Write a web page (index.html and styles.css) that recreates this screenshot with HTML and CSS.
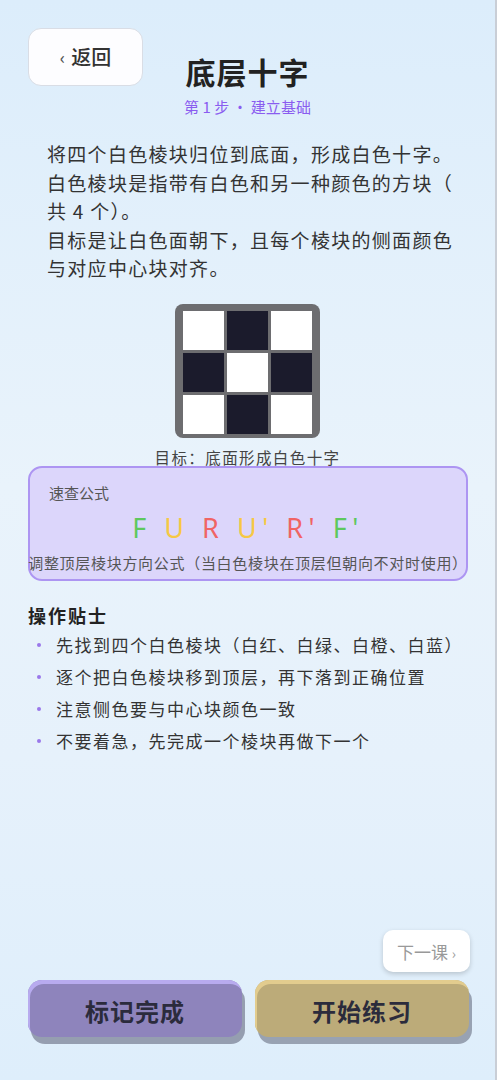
FILE: index.html
```html
<!DOCTYPE html>
<html lang="zh-CN">
<head>
<meta charset="UTF-8">
<meta name="viewport" content="width=device-width, initial-scale=1.0">
<title>底层十字</title>
<link rel="stylesheet" href="styles.css">
</head>
<body>
<div class="page">
    <header class="top">
        <button class="back-btn"><span class="chev">‹</span>返回</button>
        <div class="heading">
            <h1>底层十字</h1>
            <div class="step">第 1 步 · 建立基础</div>
        </div>
    </header>

    <p class="intro">将四个白色棱块归位到底面，形成白色十字。白色棱块是指带有白色和另一种颜色的方块（共 4 个）。<br>目标是让白色面朝下，且每个棱块的侧面颜色与对应中心块对齐。</p>

    <div class="cube-wrap">
        <div class="face">
            <div class="cell"></div>
            <div class="cell dark"></div>
            <div class="cell"></div>
            <div class="cell dark"></div>
            <div class="cell"></div>
            <div class="cell dark"></div>
            <div class="cell"></div>
            <div class="cell dark"></div>
            <div class="cell"></div>
        </div>
        <div class="face-label">目标：底面形成白色十字</div>
    </div>

    <div class="formula-card">
        <div class="card-title">速查公式</div>
        <div class="formula">
            <span class="g">F</span> <span class="y">U</span> <span class="r">R</span> <span class="y">U'</span> <span class="r">R'</span> <span class="g">F'</span>
        </div>
        <div class="formula-desc">调整顶层棱块方向公式（当白色棱块在顶层但朝向不对时使用）</div>
    </div>

    <section class="tips">
        <h2>操作贴士</h2>
        <ul>
            <li>先找到四个白色棱块（白红、白绿、白橙、白蓝）</li>
            <li>逐个把白色棱块移到顶层，再下落到正确位置</li>
            <li>注意侧色要与中心块颜色一致</li>
            <li>不要着急，先完成一个棱块再做下一个</li>
        </ul>
    </section>

    <footer class="bottom">
        <button class="next-btn">下一课 <span class="chev">›</span></button>
        <div class="actions">
            <button class="big-btn done">标记完成</button>
            <button class="big-btn practice">开始练习</button>
        </div>
    </footer>
</div>
</body>
</html>
```

FILE: styles.css
```css
* {
    box-sizing: border-box;
}
body {
    margin: 0;
    font-family: "Noto Sans CJK SC", "Noto Sans", sans-serif;
    color: #333;
    background: linear-gradient(to bottom, #dcedfb 0%, #e9f3fb 45%, #e6f1fb 70%, #deeefb 100%);
}
button {
    font-family: inherit;
    cursor: pointer;
}
.page {
    height: 100vh;
    display: flex;
    flex-direction: column;
    border-right: 2px solid #c9ced6;
}
.top {
    display: grid;
    grid-template-columns: 1fr auto 1fr;
    padding-top: 28px;
}
.back-btn {
    justify-self: start;
    margin-left: 28px;
    width: 115px;
    height: 58px;
    background: #fdfdff;
    border: 1.5px solid #d9dde5;
    border-radius: 13px;
    font-size: 20px;
    font-weight: 500;
    color: #333;
    display: flex;
    align-items: center;
    justify-content: center;
    gap: 6px;
    padding: 0 0 2px;
}
.back-btn .chev {
    font-size: 17px;
    color: #555;
}
.heading {
    text-align: center;
    padding-top: 25px;
}
h1 {
    margin: 0;
    font-size: 30px;
    line-height: 36px;
    font-weight: 700;
    color: #222;
    letter-spacing: 1px;
}
.step {
    margin-top: 6px;
    font-size: 15px;
    line-height: 24px;
    color: #8a5cf0;
}
.intro {
    margin: 21px 0 0 47px;
    width: 412px;
    font-size: 19px;
    line-height: 28.5px;
    letter-spacing: 1.3px;
    line-break: anywhere;
    color: #333;
}
.cube-wrap {
    margin-top: 21px;
    display: flex;
    flex-direction: column;
    align-items: center;
}
.face {
    display: grid;
    grid-template-columns: repeat(3, 41px);
    grid-auto-rows: 39px;
    gap: 3px;
    padding: 7px 8px 4px;
    background: #6d6d70;
    border-radius: 8px;
}
.cell {
    background: #ffffff;
}
.cell.dark {
    background: #1b1b2c;
}
.face-label {
    margin-top: 10px;
    font-size: 15.5px;
    line-height: 18px;
    letter-spacing: 1.4px;
    color: #444;
}
.formula-card {
    margin: 0 27px 0 28px;
    padding: 15px 19px 6px;
    background: #dcd6fb;
    border: 2px solid #ad95f2;
    border-radius: 14px;
}
.card-title {
    font-size: 15px;
    line-height: 20px;
    color: #555;
}
.formula {
    margin-top: 8px;
    text-align: center;
    font-family: "Noto Sans", sans-serif;
    font-size: 27px;
    line-height: 34px;
    letter-spacing: 5.5px;
}
.formula .g {
    color: #5ec85e;
}
.formula .y {
    color: #f6c844;
}
.formula .r {
    color: #f06464;
}
.formula-desc {
    margin: 8px -21px 0;
    text-align: center;
    white-space: nowrap;
    font-size: 15px;
    line-height: 20px;
    letter-spacing: 0.7px;
    color: #555;
}
.tips {
    margin: 21px 28px 0;
}
.tips h2 {
    margin: 0;
    font-size: 18px;
    line-height: 26px;
    font-weight: 700;
    letter-spacing: 2px;
    color: #222;
}
.tips ul {
    list-style: none;
    margin: 1px 0 0;
    padding: 0;
}
.tips li {
    position: relative;
    padding-left: 28px;
    font-size: 17px;
    line-height: 32px;
    letter-spacing: 1.5px;
    color: #333;
}
.tips li::before {
    content: "";
    position: absolute;
    left: 9px;
    top: 14px;
    width: 4px;
    height: 4px;
    border-radius: 50%;
    background: #9a78ea;
}
.bottom {
    margin-top: auto;
    padding-bottom: 43px;
    display: flex;
    flex-direction: column;
}
.next-btn {
    align-self: flex-end;
    margin-right: 25px;
    width: 87px;
    height: 42px;
    background: #fff;
    border: none;
    border-radius: 10px;
    box-shadow: 0 2px 5px rgba(0, 0, 0, 0.18);
    font-size: 17px;
    color: #999;
    padding: 0;
}
.next-btn .chev {
    font-size: 14px;
}
.actions {
    margin-top: 8px;
    padding: 0 25px 0 28px;
    display: flex;
    gap: 13px;
}
.big-btn {
    width: 214px;
    height: 57px;
    border: none;
    border-radius: 14px;
    font-size: 24px;
    font-weight: 700;
    color: #2b2b3c;
    letter-spacing: 1px;
    padding: 3px 0 0;
}
.big-btn.done {
    background: #8e84bc;
    box-shadow: inset 2px 4px 0 #b8abef, 3px 7px 0 #959eb0;
}
.big-btn.practice {
    background: #bcab79;
    box-shadow: inset 2px 4px 0 #e2cc8e, 3px 7px 0 #98a2b2;
}
```
